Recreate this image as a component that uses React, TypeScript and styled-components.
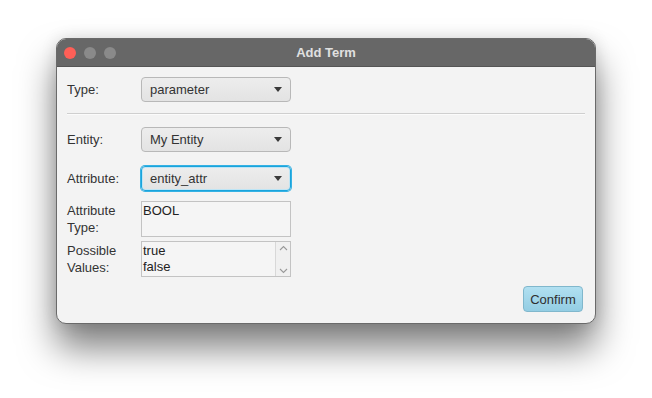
import React from "react";
import styled, { createGlobalStyle } from "styled-components";

const Global = createGlobalStyle`
  html, body { margin: 0; padding: 0; background: #ffffff; }
  body { font-family: "Liberation Sans", Arial, sans-serif; }
  * { box-sizing: border-box; }
`;

const Page = styled.div`
  width: 652px;
  height: 398px;
  padding: 38px 0 0 56px;
`;

const Window = styled.div`
  width: 540px;
  height: 286px;
  border-radius: 10px;
  overflow: hidden;
  background: #f3f3f3;
  border: 1px solid #6a6a6a;
  box-shadow: 0 24px 36px rgba(0, 0, 0, 0.5), 0 0 16px rgba(0, 0, 0, 0.12);
  display: flex;
  flex-direction: column;
`;

const TitleBar = styled.div`
  height: 28px;
  flex: 0 0 28px;
  background: #676767;
  border-bottom: 1px solid #555;
  display: flex;
  align-items: center;
  padding-left: 7px;
  position: relative;
`;

const Lights = styled.div`
  display: flex;
  gap: 8px;
`;

const Light = styled.span<{ $c: string }>`
  width: 12px;
  height: 12px;
  border-radius: 50%;
  background: ${(p) => p.$c};
`;

const Title = styled.div`
  position: absolute;
  left: 0;
  right: 0;
  text-align: center;
  font-size: 13px;
  font-weight: bold;
  color: #e0e0e0;
  pointer-events: none;
`;

const Body = styled.div`
  flex: 1;
  display: flex;
  flex-direction: column;
  padding: 10px 10px 0 10px;
`;

const Row = styled.div<{ $mt?: number; $top?: boolean }>`
  display: flex;
  align-items: ${(p) => (p.$top ? "flex-start" : "center")};
  margin-top: ${(p) => p.$mt ?? 0}px;
`;

const Label = styled.div<{ $top?: boolean }>`
  width: 74px;
  flex: 0 0 74px;
  font-size: 13px;
  color: #333;
  line-height: 17px;
  padding-top: ${(p) => (p.$top ? 1 : 0)}px;
`;

const Combo = styled.div<{ $focus?: boolean }>`
  width: 150px;
  height: 25px;
  border-radius: 4px;
  border: 1px solid ${(p) => (p.$focus ? "#1aa4dc" : "#b8b8b8")};
  box-shadow: ${(p) =>
    p.$focus ? "0 0 0 1px #36b2e4, inset 0 0 0 1px #bfe5f5" : "none"};
  background: linear-gradient(#ededed, #e3e3e3);
  display: flex;
  align-items: center;
  justify-content: space-between;
  padding: 0 8px 0 8px;
  font-size: 13px;
  color: #333;
`;

const Arrow = styled.span`
  width: 0;
  height: 0;
  border-left: 4.5px solid transparent;
  border-right: 4.5px solid transparent;
  border-top: 5px solid #3a3a3a;
  margin-right: 0px;
`;

const Separator = styled.div`
  height: 2px;
  margin: 11px 0 0 0;
  border-top: 1px solid #cfcfcf;
  border-bottom: 1px solid #fbfbfb;
`;

const TextBox = styled.div`
  width: 150px;
  height: 36px;
  border: 1px solid #c3c3c3;
  background: #f5f5f5;
  display: flex;
  font-size: 13px;
  color: #222;
  line-height: 16px;
`;

const TextContent = styled.div`
  flex: 1;
  padding: 1px 0 0 1px;
`;

const ScrollBar = styled.div`
  width: 15px;
  border-left: 1px solid #d8d8d8;
  background: #f0f0f0;
  display: flex;
  flex-direction: column;
  justify-content: space-between;
  align-items: center;
  padding: 3px 0 2px;
`;

const Footer = styled.div`
  display: flex;
  justify-content: flex-end;
  margin-top: 9px;
  padding-right: 2px;
`;

const Button = styled.div`
  width: 60px;
  height: 26px;
  border-radius: 4px;
  border: 1px solid #80b7cc;
  background: linear-gradient(#b1e0f1, #93cde3);
  font-size: 13px;
  color: #2e2e2e;
  display: flex;
  align-items: center;
  justify-content: center;
`;

const Chevron = ({ up }: { up?: boolean }) => (
  <svg width="9" height="6" viewBox="0 0 9 6">
    <path
      d={up ? "M1 5 L4.5 1.5 L8 5" : "M1 1 L4.5 4.5 L8 1"}
      fill="none"
      stroke="#999"
      strokeWidth="1.1"
    />
  </svg>
);

export default function App() {
  return (
    <Page>
      <Global />
      <Window>
        <TitleBar>
          <Lights>
            <Light $c="#fe5f57" />
            <Light $c="#8a8a8a" />
            <Light $c="#8a8a8a" />
          </Lights>
          <Title>Add Term</Title>
        </TitleBar>
        <Body>
          <Row>
            <Label>Type:</Label>
            <Combo>
              parameter
              <Arrow />
            </Combo>
          </Row>
          <Separator />
          <Row $mt={12}>
            <Label>Entity:</Label>
            <Combo>
              My Entity
              <Arrow />
            </Combo>
          </Row>
          <Row $mt={14}>
            <Label>Attribute:</Label>
            <Combo $focus>
              entity_attr
              <Arrow />
            </Combo>
          </Row>
          <Row $mt={10} $top>
            <Label $top>
              Attribute
              <br />
              Type:
            </Label>
            <TextBox>
              <TextContent>BOOL</TextContent>
            </TextBox>
          </Row>
          <Row $mt={4} $top>
            <Label $top>
              Possible
              <br />
              Values:
            </Label>
            <TextBox>
              <TextContent>
                true
                <br />
                false
              </TextContent>
              <ScrollBar>
                <Chevron up />
                <Chevron />
              </ScrollBar>
            </TextBox>
          </Row>
          <Footer>
            <Button>Confirm</Button>
          </Footer>
        </Body>
      </Window>
    </Page>
  );
}
